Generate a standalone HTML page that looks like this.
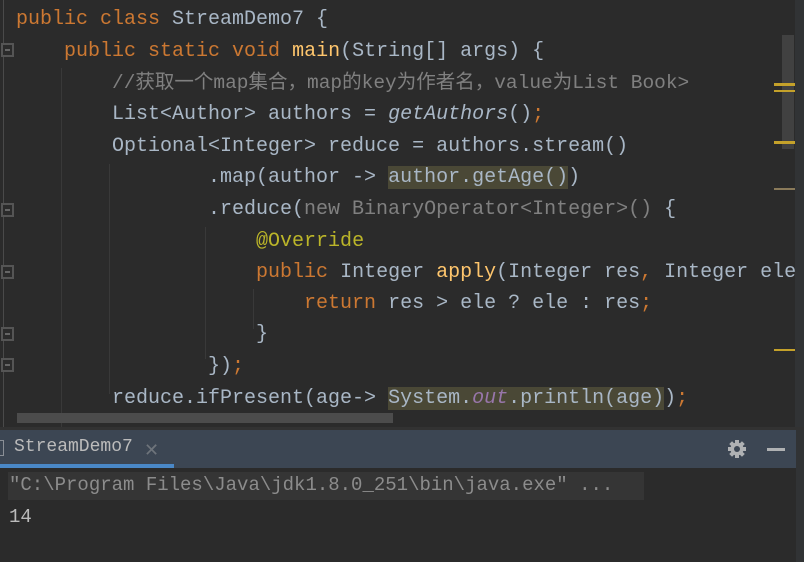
<!DOCTYPE html>
<html><head><meta charset="utf-8"><style>
body{margin:0;width:804px;height:562px;background:#2b2b2b;overflow:hidden;position:relative;font-family:"Liberation Mono","Noto Sans CJK SC",monospace;}
.ed{position:absolute;left:0;top:0;width:804px;height:428px;background:#2b2b2b;}
.l{position:absolute;left:16px;font-size:20px;line-height:24px;color:#a9b7c6;white-space:pre;}
.k{color:#cc7832}.m{color:#ffc66d}.c{color:#808080}.g{color:#808080}.a{color:#bbb529}.o{color:#9876aa;font-style:italic}.i{font-style:italic}
.h{background:#4a4836}
.guide{position:absolute;width:1px;background:#393939}
.fold{position:absolute;left:1px;width:13px;height:14px;border:2px solid #555;box-sizing:border-box;background:#2b2b2b}
.fold:after{content:"";position:absolute;left:2px;top:4px;width:5px;height:2px;background:#666}
.tab{position:absolute;left:0;top:430px;width:796px;height:38px;background:#3c4653}
.con{position:absolute;font-size:19px;color:#a9b7c6;white-space:pre}
</style></head><body>
<div class="ed">
<div style="position:absolute;left:3px;top:0;width:1px;height:428px;background:#4a4a4a"></div>
<div class="fold" style="top:43px"></div>
<div class="fold" style="top:203px"></div>
<div class="fold" style="top:265px"></div>
<div class="fold" style="top:327px"></div>
<div class="fold" style="top:358px"></div>
<div class="guide" style="left:61px;top:68px;height:360px"></div>
<div class="guide" style="left:109px;top:164px;height:230px"></div>
<div class="guide" style="left:205px;top:227px;height:132px"></div>
<div class="guide" style="left:253px;top:289px;height:40px"></div>
<div class="l" style="top:8px"><span class="k">public class </span>StreamDemo7 {</div>
<div class="l" style="top:40px">    <span class="k">public static void </span><span class="m">main</span>(String[] args) {</div>
<div class="l c" style="top:71px;left:112px;font-size:19.5px">//获取一个map集合，map的key为作者名，value为List Book&gt;</div>
<div class="l" style="top:103px">        List&lt;Author&gt; authors = <span class="i">getAuthors</span>()<span class="k">;</span></div>
<div class="l" style="top:135px">        Optional&lt;Integer&gt; reduce = authors.stream()</div>
<div class="l" style="top:166px">                .map(author -&gt; <span class="h">author.getAge()</span>)</div>
<div class="l" style="top:198px">                .reduce(<span class="g">new BinaryOperator&lt;Integer&gt;()</span> {</div>
<div class="l" style="top:230px">                    <span class="a">@Override</span></div>
<div class="l" style="top:261px">                    <span class="k">public </span>Integer <span class="m">apply</span>(Integer res<span class="k">, </span>Integer ele</div>
<div class="l" style="top:292px">                        <span class="k">return </span>res &gt; ele ? ele : res<span class="k">;</span></div>
<div class="l" style="top:323px">                    }</div>
<div class="l" style="top:355px">                })<span class="k">;</span></div>
<div class="l" style="top:387px">        reduce.ifPresent(age-&gt; <span class="h">System.<span class="o">out</span>.println(age)</span>)<span class="k">;</span></div>
<div style="position:absolute;left:17px;top:413px;width:376px;height:10px;background:#4c4c4c"></div>
<div style="position:absolute;left:782px;top:35px;width:12px;height:114px;background:#414141"></div>
<div style="position:absolute;left:774px;top:83px;width:21px;height:3px;background:#c4a12a"></div>
<div style="position:absolute;left:774px;top:90px;width:21px;height:2px;background:#c4a12a"></div>
<div style="position:absolute;left:774px;top:141px;width:21px;height:3px;background:#c4a12a"></div>
<div style="position:absolute;left:774px;top:188px;width:21px;height:2px;background:#8a7a5a"></div>
<div style="position:absolute;left:774px;top:349px;width:21px;height:2px;background:#c4a12a"></div>
<div style="position:absolute;left:795px;top:0;width:9px;height:428px;background:#313335"></div>
</div>
<div style="position:absolute;left:0;top:427px;width:804px;height:3px;background:#323232"></div>
<div class="tab">
<div style="position:absolute;left:-4px;top:10px;width:8px;height:16px;border:1px solid #8a8f96;box-sizing:border-box"></div>
<div class="con" style="left:14px;top:7px;font-size:18px;color:#bbbbbb">StreamDemo7</div>
<div style="position:absolute;left:144px;top:10px;color:#6e747b;font-size:18px;font-family:'DejaVu Sans',sans-serif">✕</div>
<div style="position:absolute;left:0;top:34px;width:174px;height:4px;background:#4a88c7"></div>
<svg style="position:absolute;left:727px;top:9px" width="20" height="20" viewBox="0 0 20 20"><g fill="#afb1b3"><circle cx="10" cy="10" r="6.5"/><rect x="8" y="1" width="4" height="18"/><rect x="1" y="8" width="18" height="4"/><rect x="8" y="1" width="4" height="18" transform="rotate(45 10 10)"/><rect x="8" y="1" width="4" height="18" transform="rotate(-45 10 10)"/></g><circle cx="10" cy="10" r="3" fill="#3c4653"/></svg>
<div style="position:absolute;left:767px;top:18px;width:18px;height:3px;background:#afb1b3"></div>
</div>
<div style="position:absolute;left:796px;top:430px;width:8px;height:132px;background:#313335"></div>
<div style="position:absolute;left:8px;top:472px;width:636px;height:28px;background:#353535"></div>
<div class="con" style="left:9px;top:474px;color:#8c8c8c">"C:\Program Files\Java\jdk1.8.0_251\bin\java.exe" ...</div>
<div class="con" style="left:9px;top:506px;color:#bbbbbb">14</div>
</body></html>
